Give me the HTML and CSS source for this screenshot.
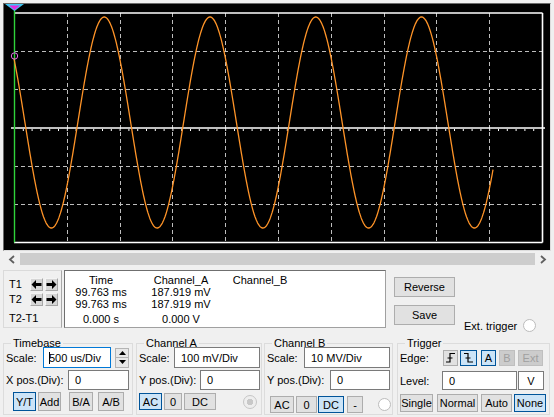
FILE: index.html
```html
<!DOCTYPE html>
<html lang="en">
<head>
  <meta charset="UTF-8">
  <title>Oscilloscope</title>
  <link rel="stylesheet" href="styles.css">
</head>
<body>
  <div class="window">
    <div class="scope">
      <svg class="screen" viewBox="4 4 546 246" width="546" height="246">
        <g class="grid">
          <line x1="67.5" y1="13" x2="67.5" y2="242"/>
          <line x1="120.5" y1="13" x2="120.5" y2="242"/>
          <line x1="172.5" y1="13" x2="172.5" y2="242"/>
          <line x1="225.5" y1="13" x2="225.5" y2="242"/>
          <line x1="278.5" y1="13" x2="278.5" y2="242"/>
          <line x1="331.5" y1="13" x2="331.5" y2="242"/>
          <line x1="384.5" y1="13" x2="384.5" y2="242"/>
          <line x1="436.5" y1="13" x2="436.5" y2="242"/>
          <line x1="489.5" y1="13" x2="489.5" y2="242"/>
          <line x1="14" y1="51.5" x2="542" y2="51.5"/>
          <line x1="14" y1="89.5" x2="542" y2="89.5"/>
          <line x1="14" y1="166.5" x2="542" y2="166.5"/>
          <line x1="14" y1="204.5" x2="542" y2="204.5"/>
        </g>
        <g class="frame">
          <line x1="14" y1="13" x2="542.5" y2="13"/>
          <line x1="542.5" y1="13" x2="542.5" y2="242.5"/>
          <line x1="14" y1="242.5" x2="542.5" y2="242.5"/>
          <line x1="11" y1="128" x2="545" y2="128"/>
        </g>
        <line class="ticks" x1="14" y1="130" x2="545" y2="130"/>
        <line class="cursor-line" x1="14.5" y1="9" x2="14.5" y2="242.5"/>
        <polygon class="marker-a" points="5,4 24,4 14.5,11"/>
        <polygon class="marker-b" points="9,5.5 20,5.5 14.5,10"/>
        <polyline id="trace" class="trace" points=""/>
        <circle class="probe" cx="14.5" cy="56" r="3.2"/>
      </svg>
    </div>

    <div class="hscroll">
      <span class="scroll-arrow">
        <svg width="8" height="9" viewBox="0 0 8 9"><polyline points="6,1 2,4.5 6,8"/></svg>
      </span>
      <span class="thumb"></span>
      <span class="scroll-arrow">
        <svg width="8" height="9" viewBox="0 0 8 9"><polyline points="2,1 6,4.5 2,8"/></svg>
      </span>
    </div>

    <div class="readout">
      <div class="cursors">
        <div class="cursor-row">
          <span class="cursor-name">T1</span>
          <span class="arrow-btn"><svg width="11" height="11" viewBox="0 0 11 11"><path d="M0.5 5.5 L5 1 V4 H10.5 V7 H5 V10 Z"/></svg></span>
          <span class="arrow-btn"><svg width="11" height="11" viewBox="0 0 11 11"><path d="M10.5 5.5 L6 1 V4 H0.5 V7 H6 V10 Z"/></svg></span>
        </div>
        <div class="cursor-row">
          <span class="cursor-name">T2</span>
          <span class="arrow-btn"><svg width="11" height="11" viewBox="0 0 11 11"><path d="M0.5 5.5 L5 1 V4 H10.5 V7 H5 V10 Z"/></svg></span>
          <span class="arrow-btn"><svg width="11" height="11" viewBox="0 0 11 11"><path d="M10.5 5.5 L6 1 V4 H0.5 V7 H6 V10 Z"/></svg></span>
        </div>
        <div class="cursor-diff">T2-T1</div>
      </div>

      <div class="values">
        <span>Time</span><span>Channel_A</span><span>Channel_B</span>
        <span>99.763 ms</span><span>187.919 mV</span><span></span>
        <span>99.763 ms</span><span>187.919 mV</span><span></span>
        <span>0.000 s</span><span>0.000 V</span><span></span>
      </div>

      <div class="actions">
        <button class="btn wide">Reverse</button>
        <button class="btn wide">Save</button>
      </div>

      <div class="ext">
        <span>Ext. trigger</span>
        <span class="radio"></span>
      </div>
    </div>

    <div class="controls">
      <fieldset class="group timebase">
        <legend>Timebase</legend>
        <div class="row first">
          <label class="lbl w37">Scale:</label>
          <div class="field focus w68"><span class="caret"></span>500 us/Div</div>
          <div class="spinner">
            <span><svg width="7" height="4" viewBox="0 0 7 4"><polygon points="0,4 7,4 3.5,0"/></svg></span>
            <span><svg width="7" height="4" viewBox="0 0 7 4"><polygon points="0,0 7,0 3.5,4"/></svg></span>
          </div>
        </div>
        <div class="row">
          <label class="lbl w62">X pos.(Div):</label>
          <div class="field w61">0</div>
        </div>
        <div class="row buttons tb">
          <button class="btn on" style="width:23px;margin-left:7px">Y/T</button>
          <button class="btn" style="width:23px;margin-left:2px">Add</button>
          <button class="btn" style="width:24px;margin-left:8px">B/A</button>
          <button class="btn" style="width:26px;margin-left:5px">A/B</button>
        </div>
      </fieldset>

      <fieldset class="group chan-a">
        <legend>Channel A</legend>
        <div class="row first">
          <label class="lbl w35">Scale:</label>
          <div class="field w86">100 mV/Div</div>
        </div>
        <div class="row">
          <label class="lbl w61">Y pos.(Div):</label>
          <div class="field w60">0</div>
        </div>
        <div class="row buttons ca">
          <button class="btn on" style="width:23px">AC</button>
          <button class="btn" style="width:18px;margin-left:2px">0</button>
          <button class="btn" style="width:32px;margin-left:2px">DC</button>
          <span class="radio off" style="margin-left:27px"></span>
        </div>
      </fieldset>

      <fieldset class="group chan-b">
        <legend>Channel B</legend>
        <div class="row first">
          <label class="lbl w37">Scale:</label>
          <div class="field w86">10 MV/Div</div>
        </div>
        <div class="row">
          <label class="lbl w63">Y pos.(Div):</label>
          <div class="field w60">0</div>
        </div>
        <div class="row buttons cb">
          <button class="btn" style="width:24px;margin-left:3px">AC</button>
          <button class="btn" style="width:21px;margin-left:2px">0</button>
          <button class="btn on" style="width:26px;margin-left:1px">DC</button>
          <button class="btn" style="width:16px;margin-left:3px">-</button>
          <span class="radio" style="margin-left:15px"></span>
        </div>
      </fieldset>

      <fieldset class="group trigger">
        <legend>Trigger</legend>
        <div class="row first">
          <label class="lbl w43">Edge:</label>
          <button class="btn small" style="width:15px">
            <svg width="11" height="11" viewBox="0 0 11 11"><path d="M1 10 H5 V1.5 H10 M2.5 6 H7.5"/></svg>
          </button>
          <button class="btn small on" style="width:17px;margin-left:2px">
            <svg width="11" height="11" viewBox="0 0 11 11"><path d="M1 1.5 H5 V10 H10 M2.5 6 H7.5"/></svg>
          </button>
          <button class="btn small on" style="width:15px;margin-left:4px">A</button>
          <button class="btn small dis" style="width:16px;margin-left:3px">B</button>
          <button class="btn small dis" style="width:25px;margin-left:3px">Ext</button>
        </div>
        <div class="row level">
          <label class="lbl w42">Level:</label>
          <div class="field w75">0</div>
          <div class="field unit">V</div>
        </div>
        <div class="row buttons tr">
          <button class="btn" style="width:33px">Single</button>
          <button class="btn" style="width:41px;margin-left:4px">Normal</button>
          <button class="btn" style="width:31px;margin-left:3px">Auto</button>
          <button class="btn on" style="width:32px;margin-left:2px">None</button>
        </div>
      </fieldset>
    </div>
  </div>

  <script src="script.js"></script>
</body>
</html>
```

FILE: styles.css
```css
* {
  margin: 0;
  padding: 0;
  box-sizing: border-box;
}

body {
  font-family: 'Liberation Sans', Arial, sans-serif;
  font-size: 11px;
  color: #000;
  background: #f0f0f0;
}

.window {
  width: 554px;
  height: 417px;
  overflow: hidden;
  padding-top: 3px;
  background: #f0f0f0;
}

/* scope screen */

.scope {
  margin: 0 3px;
  width: 548px;
  height: 248px;
  border: 1px solid;
  border-color: #6a6a6a #dcdcdc #dcdcdc #6a6a6a;
  background: #000;
}

.screen {
  display: block;
}

.grid line {
  stroke: #bdbdbd;
  stroke-width: 1;
  stroke-dasharray: 4 3;
}

.frame line {
  stroke: #fff;
  stroke-width: 1.6;
}

.ticks {
  stroke: #fff;
  stroke-width: 2;
  stroke-dasharray: 1 7.8;
}

.cursor-line {
  stroke: #2fd33a;
  stroke-width: 1.4;
}

.marker-a {
  fill: #3ec6f2;
}

.marker-b {
  fill: #e22ee2;
}

.trace {
  fill: none;
  stroke: #ff9428;
  stroke-width: 1.3;
}

.probe {
  fill: none;
  stroke: #e66be6;
  stroke-width: 1;
}

/* scrollbar */

.hscroll {
  display: flex;
  height: 12px;
  margin: 2px 4px 0 4px;
  background: #f0f0f0;
}

.scroll-arrow {
  width: 16px;
  display: flex;
  align-items: center;
  justify-content: center;
}

.scroll-arrow:last-child {
  width: 15px;
}

.scroll-arrow polyline {
  fill: none;
  stroke: #606060;
  stroke-width: 1.8;
}

.thumb {
  flex: 1;
  background: #cdcdcd;
}

/* cursor readout */

.readout {
  display: flex;
  height: 58px;
  margin-top: 5px;
  padding-left: 3px;
}

.cursors {
  width: 59px;
  border: 1px solid #dadada;
  border-right-color: #a8a8a8;
  padding: 6px 0 0 5px;
}

.cursor-row {
  display: flex;
  align-items: center;
  height: 14px;
  margin-bottom: 1px;
}

.cursor-name {
  width: 21px;
}

.arrow-btn {
  width: 13px;
  height: 13px;
  margin-right: 2px;
  display: flex;
  align-items: center;
  justify-content: center;
  background: #d6d6d6;
  border: 1px solid;
  border-color: #f4f4f4 #a6a6a6 #a6a6a6 #f4f4f4;
}

.arrow-btn path {
  fill: #000;
}

.cursor-diff {
  margin-top: 6px;
  height: 12px;
  line-height: 12px;
}

.values {
  width: 322px;
  margin-left: 2px;
  background: #fff;
  border: 1px solid;
  border-color: #6f6f6f #a0a0a0 #a0a0a0 #6f6f6f;
  padding-top: 2px;
  display: grid;
  grid-template-columns: 72px 88px 70px;
  grid-template-rows: 13px 12px 12px 18px;
  align-items: center;
  justify-items: center;
  line-height: 12px;
}

.actions {
  display: flex;
  flex-direction: column;
  gap: 8px;
  margin-left: 8px;
  padding-top: 7px;
}

.btn {
  font-family: inherit;
  font-size: 11px;
  color: #000;
  height: 19px;
  background: #e1e1e1;
  border: 1px solid #adadad;
  display: flex;
  align-items: center;
  justify-content: center;
  white-space: nowrap;
}

.btn.wide {
  width: 61px;
  height: 20px;
}

.btn.on {
  background: #cce4f7;
  border-color: #005499;
}

.btn.dis {
  background: #cccccc;
  border-color: #bfbfbf;
  color: #a0a0a0;
}

.btn.small {
  height: 16px;
}

.btn svg path {
  fill: none;
  stroke: #000;
  stroke-width: 1.2;
}

.ext {
  display: flex;
  align-items: center;
  gap: 6px;
  margin-left: 9px;
  align-self: flex-end;
  margin-bottom: -4px;
  height: 13px;
}

.radio {
  width: 13px;
  height: 13px;
  border-radius: 50%;
  border: 1px solid #bcbcbc;
  background: #fff;
  display: inline-block;
}

.radio.off {
  width: 14px;
  height: 14px;
  background: radial-gradient(circle, #c8c8c8 0 3px, #eeeeee 3.5px);
  border-color: #c6c6c6;
}

/* control groups */

.controls {
  display: flex;
  margin-top: 9px;
  padding-left: 3px;
}

.group {
  height: 78px;
  border: 1px solid #dcdcdc;
  padding: 0 0 0 2px;
  min-width: 0;
}

.group legend {
  line-height: 12px;
  margin-left: 5px;
  padding: 0 2px;
}

.timebase { width: 130px; }
.chan-a { width: 126px; margin-left: 3px; }
.chan-b { width: 129px; margin-left: 2px; }
.trigger { width: 153px; margin-left: 4px; }

.row {
  display: flex;
  align-items: center;
  height: 20px;
  margin-top: 2px;
}

.row.first {
  height: 21px;
  margin-top: -2px;
}

.row.level {
  margin-top: 3px;
  height: 19px;
}

.row.buttons { height: 19px; }
.row.tb { margin-top: 2px; }
.row.ca { margin-top: 3px; height: 17px; }
.row.ca .btn { height: 17px; }
.row.cb { margin-top: 6px; height: 17px; }
.row.cb .btn { height: 17px; }
.row.tr { margin-top: 4px; height: 18px; }
.row.tr .btn { height: 18px; }

.lbl {
  flex: none;
  white-space: nowrap;
}

.w35 { width: 35px; }
.w37 { width: 37px; }
.w42 { width: 42px; }
.w43 { width: 43px; }
.w61 { width: 61px; }
.w62 { width: 62px; }
.w63 { width: 63px; }

.field {
  height: 100%;
  background: #fff;
  border: 1px solid #7a7a7a;
  padding-left: 6px;
  display: flex;
  align-items: center;
  white-space: nowrap;
}

.field.focus {
  border-color: #0078d7;
  padding-left: 5px;
}

.caret {
  width: 1px;
  height: 12px;
  background: #000;
  margin-right: -1px;
}

.w60 { width: 60px; }
.w61.field { width: 61px; }
.w68 { width: 68px; }
.w75 { width: 75px; }
.w86 { width: 86px; }

.field.unit {
  width: 26px;
  margin-left: 1px;
  padding-left: 0;
  justify-content: center;
}

.spinner {
  width: 14px;
  height: 20px;
  margin-left: 4px;
  border: 1px solid #b4b4b4;
  background: #e8e8e8;
  display: flex;
  flex-direction: column;
}

.spinner span {
  flex: 1;
  display: flex;
  align-items: center;
  justify-content: center;
}

.spinner span + span {
  border-top: 1px solid #b4b4b4;
}

.spinner polygon {
  fill: #000;
}
```

FILE: script.js
```js
// channel A trace, drawn in screen pixels
var trace = document.getElementById('trace');
var points = [];

for (var x = 14; x <= 493; x += 0.5) {
  var y = 122.5 - 105.5 * Math.cos(2 * Math.PI * (x + 1.5) / 105.75);
  points.push(x.toFixed(1) + ',' + y.toFixed(1));
}

trace.setAttribute('points', points.join(' '));
```
